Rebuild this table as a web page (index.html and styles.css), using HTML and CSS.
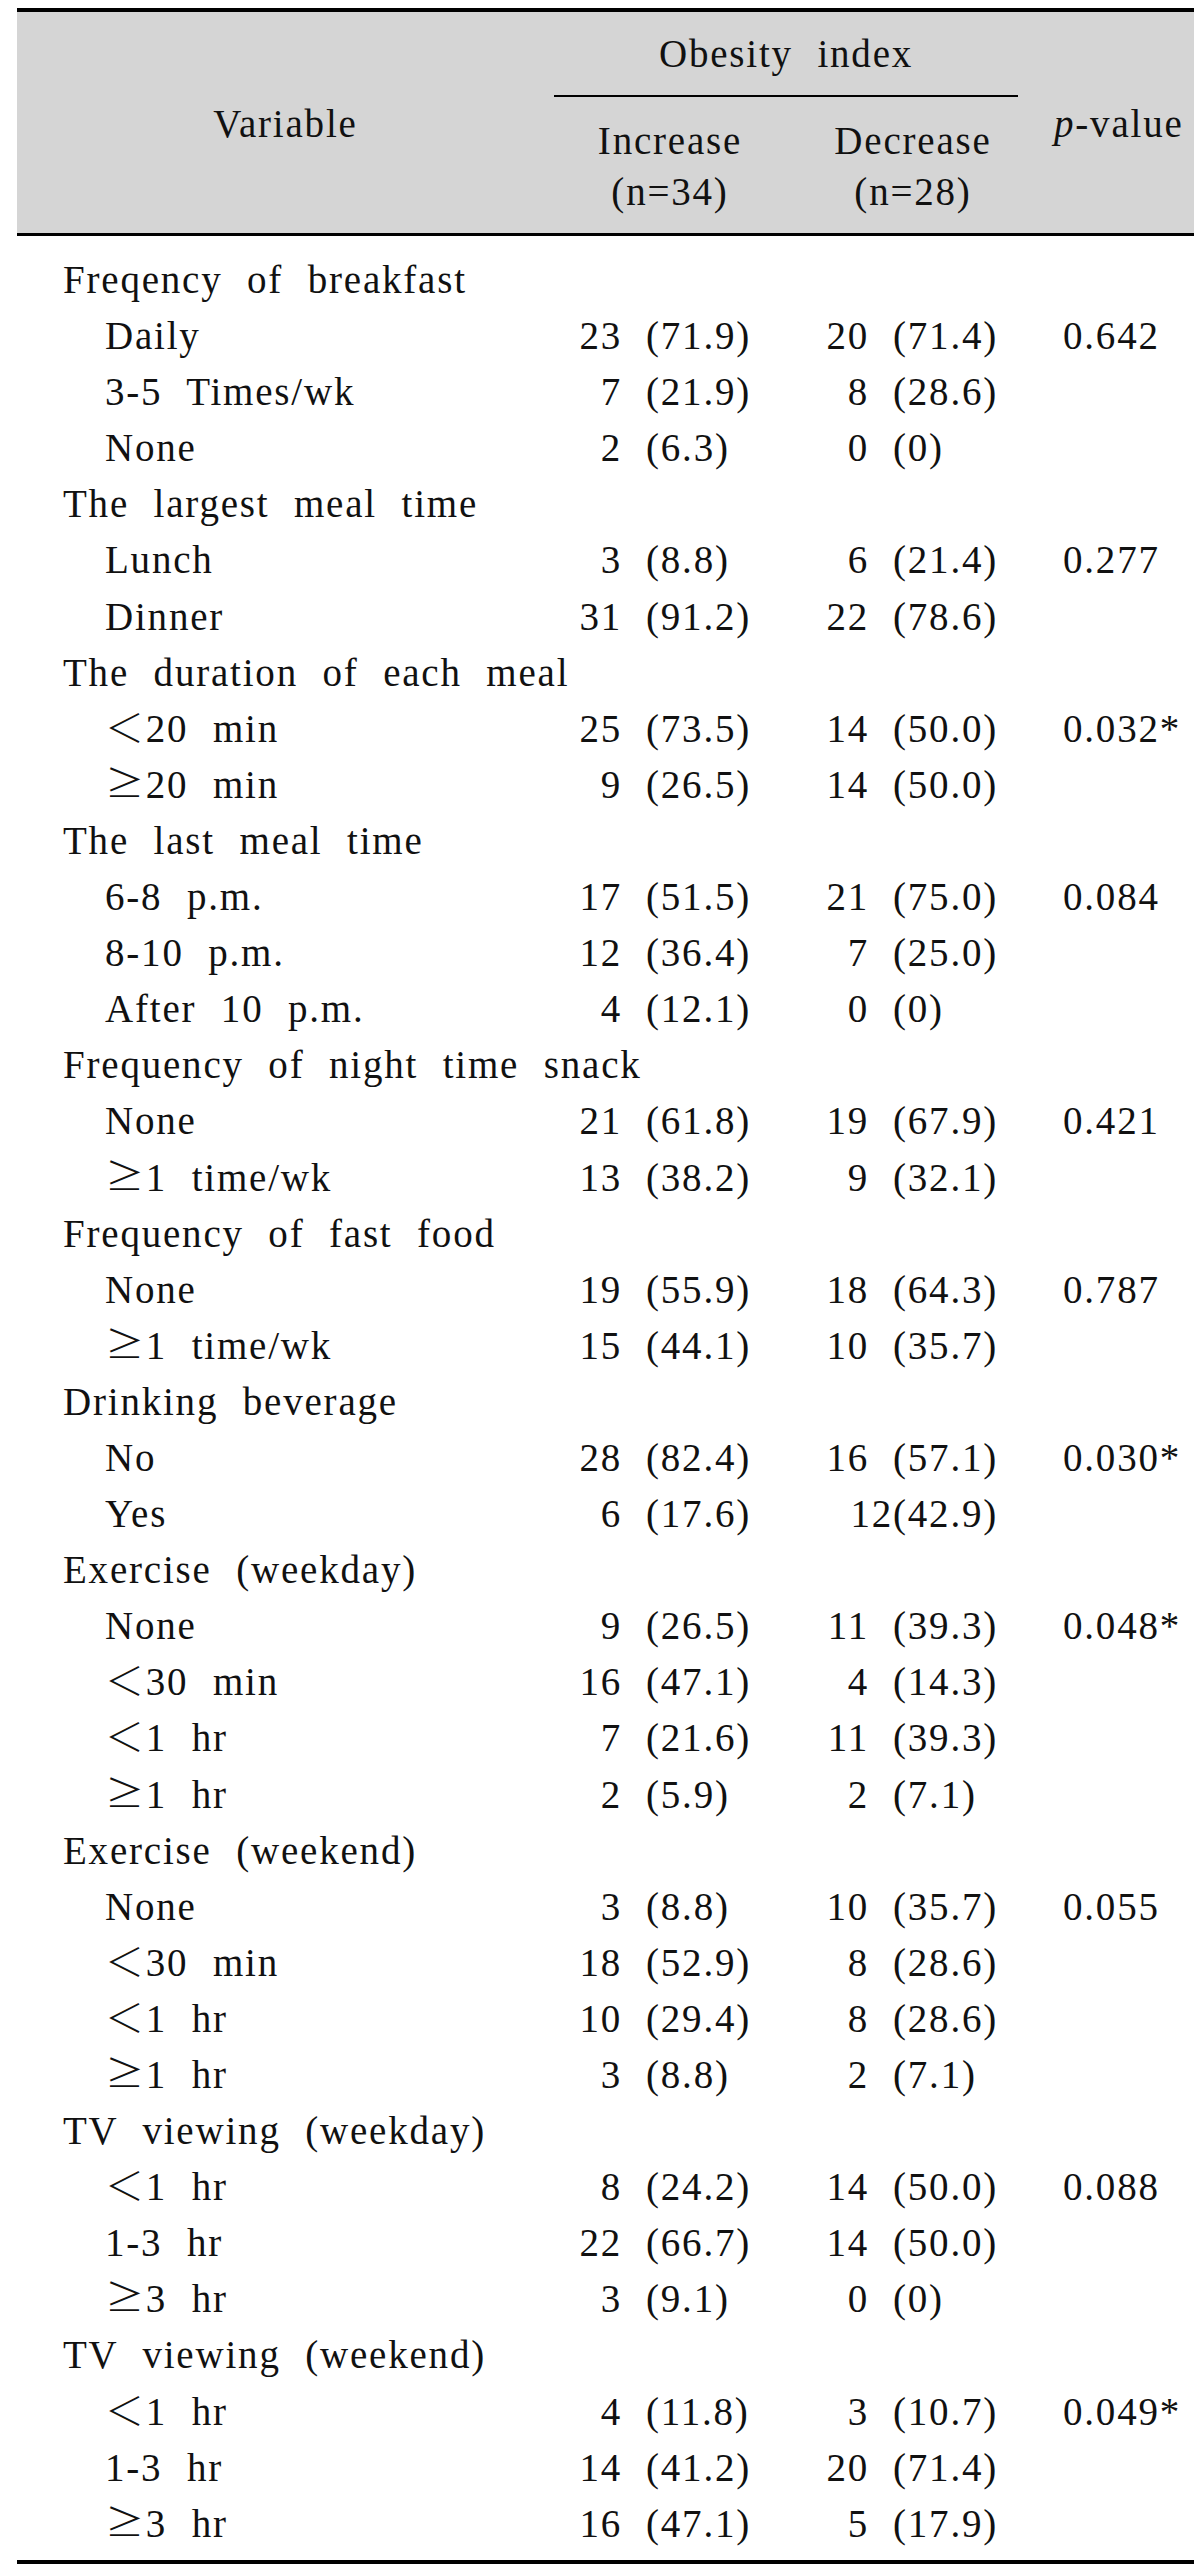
FILE: index.html
```html
<!DOCTYPE html>
<html lang="en">
<head>
<meta charset="utf-8">
<title>Obesity index table</title>
<link rel="stylesheet" href="styles.css">
</head>
<body>
<div class="table">
  <div class="head">
    <div class="h-var">Variable</div>
    <div class="h-ob">Obesity index</div>
    <div class="h-sub">
      <div class="h-col">Increase<br>(n=34)</div>
      <div class="h-col h-col2">Decrease<br>(n=28)</div>
    </div>
    <div class="h-p"><i>p</i>-value</div>
  </div>
  <div class="body">
    <div class="row cat"><div class="lab">Freqency of breakfast</div></div>
    <div class="row sub"><div class="lab">Daily</div><div class="c"><span class="n">23</span><span class="pct">(71.9)</span></div><div class="c"><span class="n">20</span><span class="pct">(71.4)</span></div><div class="p">0.642</div></div>
    <div class="row sub"><div class="lab">3-5 Times/wk</div><div class="c"><span class="n">7</span><span class="pct">(21.9)</span></div><div class="c"><span class="n">8</span><span class="pct">(28.6)</span></div><div class="p"></div></div>
    <div class="row sub"><div class="lab">None</div><div class="c"><span class="n">2</span><span class="pct">(6.3)</span></div><div class="c"><span class="n">0</span><span class="pct">(0)</span></div><div class="p"></div></div>

    <div class="row cat"><div class="lab">The largest meal time</div></div>
    <div class="row sub"><div class="lab">Lunch</div><div class="c"><span class="n">3</span><span class="pct">(8.8)</span></div><div class="c"><span class="n">6</span><span class="pct">(21.4)</span></div><div class="p">0.277</div></div>
    <div class="row sub"><div class="lab">Dinner</div><div class="c"><span class="n">31</span><span class="pct">(91.2)</span></div><div class="c"><span class="n">22</span><span class="pct">(78.6)</span></div><div class="p"></div></div>

    <div class="row cat"><div class="lab">The duration of each meal</div></div>
    <div class="row sub"><div class="lab"><span class="sym">＜</span>20 min</div><div class="c"><span class="n">25</span><span class="pct">(73.5)</span></div><div class="c"><span class="n">14</span><span class="pct">(50.0)</span></div><div class="p">0.032*</div></div>
    <div class="row sub"><div class="lab"><span class="sym">≥</span>20 min</div><div class="c"><span class="n">9</span><span class="pct">(26.5)</span></div><div class="c"><span class="n">14</span><span class="pct">(50.0)</span></div><div class="p"></div></div>

    <div class="row cat"><div class="lab">The last meal time</div></div>
    <div class="row sub"><div class="lab">6-8 p.m.</div><div class="c"><span class="n">17</span><span class="pct">(51.5)</span></div><div class="c"><span class="n">21</span><span class="pct">(75.0)</span></div><div class="p">0.084</div></div>
    <div class="row sub"><div class="lab">8-10 p.m.</div><div class="c"><span class="n">12</span><span class="pct">(36.4)</span></div><div class="c"><span class="n">7</span><span class="pct">(25.0)</span></div><div class="p"></div></div>
    <div class="row sub"><div class="lab">After 10 p.m.</div><div class="c"><span class="n">4</span><span class="pct">(12.1)</span></div><div class="c"><span class="n">0</span><span class="pct">(0)</span></div><div class="p"></div></div>

    <div class="row cat"><div class="lab">Frequency of night time snack</div></div>
    <div class="row sub"><div class="lab">None</div><div class="c"><span class="n">21</span><span class="pct">(61.8)</span></div><div class="c"><span class="n">19</span><span class="pct">(67.9)</span></div><div class="p">0.421</div></div>
    <div class="row sub"><div class="lab"><span class="sym">≥</span>1 time/wk</div><div class="c"><span class="n">13</span><span class="pct">(38.2)</span></div><div class="c"><span class="n">9</span><span class="pct">(32.1)</span></div><div class="p"></div></div>

    <div class="row cat"><div class="lab">Frequency of fast food</div></div>
    <div class="row sub"><div class="lab">None</div><div class="c"><span class="n">19</span><span class="pct">(55.9)</span></div><div class="c"><span class="n">18</span><span class="pct">(64.3)</span></div><div class="p">0.787</div></div>
    <div class="row sub"><div class="lab"><span class="sym">≥</span>1 time/wk</div><div class="c"><span class="n">15</span><span class="pct">(44.1)</span></div><div class="c"><span class="n">10</span><span class="pct">(35.7)</span></div><div class="p"></div></div>

    <div class="row cat"><div class="lab">Drinking beverage</div></div>
    <div class="row sub"><div class="lab">No</div><div class="c"><span class="n">28</span><span class="pct">(82.4)</span></div><div class="c"><span class="n">16</span><span class="pct">(57.1)</span></div><div class="p">0.030*</div></div>
    <div class="row sub"><div class="lab">Yes</div><div class="c"><span class="n">6</span><span class="pct">(17.6)</span></div><div class="c tight"><span class="n">12</span><span class="pct">(42.9)</span></div><div class="p"></div></div>

    <div class="row cat"><div class="lab">Exercise (weekday)</div></div>
    <div class="row sub"><div class="lab">None</div><div class="c"><span class="n">9</span><span class="pct">(26.5)</span></div><div class="c"><span class="n">11</span><span class="pct">(39.3)</span></div><div class="p">0.048*</div></div>
    <div class="row sub"><div class="lab"><span class="sym">＜</span>30 min</div><div class="c"><span class="n">16</span><span class="pct">(47.1)</span></div><div class="c"><span class="n">4</span><span class="pct">(14.3)</span></div><div class="p"></div></div>
    <div class="row sub"><div class="lab"><span class="sym">＜</span>1 hr</div><div class="c"><span class="n">7</span><span class="pct">(21.6)</span></div><div class="c"><span class="n">11</span><span class="pct">(39.3)</span></div><div class="p"></div></div>
    <div class="row sub"><div class="lab"><span class="sym">≥</span>1 hr</div><div class="c"><span class="n">2</span><span class="pct">(5.9)</span></div><div class="c"><span class="n">2</span><span class="pct">(7.1)</span></div><div class="p"></div></div>

    <div class="row cat"><div class="lab">Exercise (weekend)</div></div>
    <div class="row sub"><div class="lab">None</div><div class="c"><span class="n">3</span><span class="pct">(8.8)</span></div><div class="c"><span class="n">10</span><span class="pct">(35.7)</span></div><div class="p">0.055</div></div>
    <div class="row sub"><div class="lab"><span class="sym">＜</span>30 min</div><div class="c"><span class="n">18</span><span class="pct">(52.9)</span></div><div class="c"><span class="n">8</span><span class="pct">(28.6)</span></div><div class="p"></div></div>
    <div class="row sub"><div class="lab"><span class="sym">＜</span>1 hr</div><div class="c"><span class="n">10</span><span class="pct">(29.4)</span></div><div class="c"><span class="n">8</span><span class="pct">(28.6)</span></div><div class="p"></div></div>
    <div class="row sub"><div class="lab"><span class="sym">≥</span>1 hr</div><div class="c"><span class="n">3</span><span class="pct">(8.8)</span></div><div class="c"><span class="n">2</span><span class="pct">(7.1)</span></div><div class="p"></div></div>

    <div class="row cat"><div class="lab">TV viewing (weekday)</div></div>
    <div class="row sub"><div class="lab"><span class="sym">＜</span>1 hr</div><div class="c"><span class="n">8</span><span class="pct">(24.2)</span></div><div class="c"><span class="n">14</span><span class="pct">(50.0)</span></div><div class="p">0.088</div></div>
    <div class="row sub"><div class="lab">1-3 hr</div><div class="c"><span class="n">22</span><span class="pct">(66.7)</span></div><div class="c"><span class="n">14</span><span class="pct">(50.0)</span></div><div class="p"></div></div>
    <div class="row sub"><div class="lab"><span class="sym">≥</span>3 hr</div><div class="c"><span class="n">3</span><span class="pct">(9.1)</span></div><div class="c"><span class="n">0</span><span class="pct">(0)</span></div><div class="p"></div></div>

    <div class="row cat"><div class="lab">TV viewing (weekend)</div></div>
    <div class="row sub"><div class="lab"><span class="sym">＜</span>1 hr</div><div class="c"><span class="n">4</span><span class="pct">(11.8)</span></div><div class="c"><span class="n">3</span><span class="pct">(10.7)</span></div><div class="p">0.049*</div></div>
    <div class="row sub"><div class="lab">1-3 hr</div><div class="c"><span class="n">14</span><span class="pct">(41.2)</span></div><div class="c"><span class="n">20</span><span class="pct">(71.4)</span></div><div class="p"></div></div>
    <div class="row sub"><div class="lab"><span class="sym">≥</span>3 hr</div><div class="c"><span class="n">16</span><span class="pct">(47.1)</span></div><div class="c"><span class="n">5</span><span class="pct">(17.9)</span></div><div class="p"></div></div>
  </div>
</div>
</body>
</html>
```
FILE: styles.css
```css
html, body {
  margin: 0;
  padding: 0;
  background: #ffffff;
}

body {
  font-family: "Liberation Serif", "Noto Sans CJK KR", serif;
  font-size: 39px;
  letter-spacing: 1.8px;
  word-spacing: 13px;
  color: #111111;
}

.table {
  width: 1177px;
  margin: 8px 0 0 17px;
  border-top: 4px solid #000000;
  border-bottom: 4px solid #000000;
}

/* ---------- header ---------- */
.head {
  background: #d5d5d5;
  display: grid;
  grid-template-columns: 537px 464px 176px;
  grid-template-rows: 85px 136px;
  border-bottom: 3px solid #000000;
  line-height: 51px;
}

.h-var {
  grid-column: 1;
  grid-row: 1 / 3;
  text-align: center;
  padding-top: 86px;
}

.h-ob {
  grid-column: 2;
  grid-row: 1;
  text-align: center;
  padding-top: 16px;
  border-bottom: 2px solid #000000;
  box-sizing: border-box;
}

.h-sub {
  grid-column: 2;
  grid-row: 2;
  display: flex;
  padding-top: 18px;
}

.h-col {
  flex: none;
  width: 232px;
  text-align: center;
}

.h-col2 {
  margin-left: 11px;
}

.h-p {
  grid-column: 3;
  grid-row: 1 / 3;
  padding: 86px 0 0 36px;
  white-space: nowrap;
}

/* ---------- body ---------- */
.body {
  padding: 16px 0 8px;
}

.row {
  display: grid;
  grid-template-columns: 543px 247px 256px 131px;
  height: 56.1px;
  line-height: 56px;
  white-space: nowrap;
}

.lab {
  padding-left: 46px;
}

.sub .lab {
  padding-left: 88px;
}

.sym {
  font-family: "Noto Sans CJK KR", sans-serif;
  font-weight: 300;
  line-height: 1;
}

.c {
  display: flex;
}

.n {
  flex: none;
  width: 62px;
  text-align: right;
}

.pct {
  margin-left: 24px;
}

.tight .n {
  width: 86px;
}

.tight .pct {
  margin-left: 0;
}
```
